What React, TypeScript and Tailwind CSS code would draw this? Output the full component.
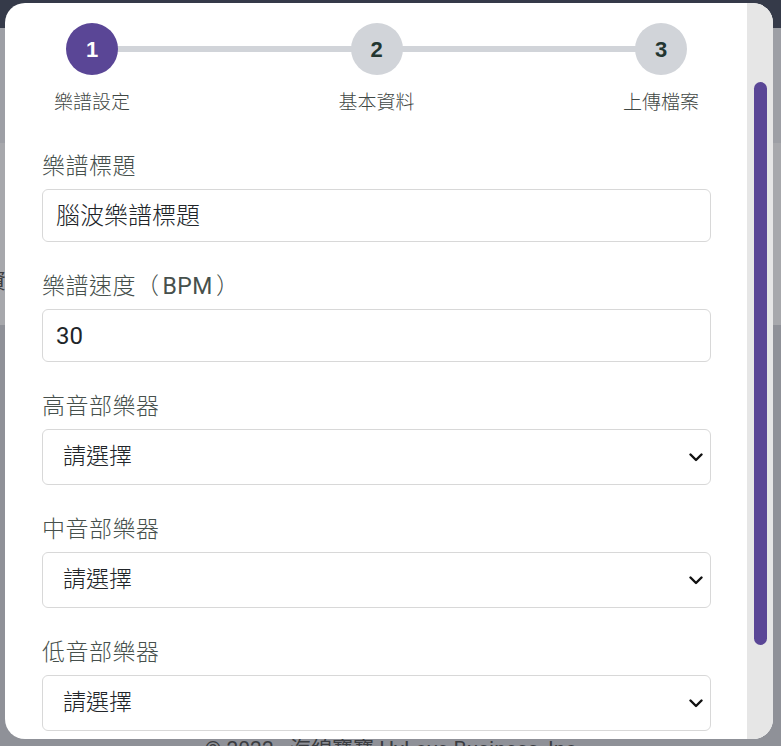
import React from "react";

const FONT = { fontFamily: '"Roboto", "Noto Sans CJK TC", sans-serif' };

const steps = [
  { n: 1, label: "樂譜設定", active: true },
  { n: 2, label: "基本資料", active: false },
  { n: 3, label: "上傳檔案", active: false },
];

function Chevron() {
  return (
    <svg width="14" height="9" viewBox="0 0 14 9" fill="none" className="shrink-0">
      <path d="M1.5 1.5L7 7l5.5-5.5" stroke="#111" strokeWidth="2.4" strokeLinecap="round" strokeLinejoin="round" />
    </svg>
  );
}

function Field({ label, children }: { label: React.ReactNode; children: React.ReactNode }) {
  return (
    <div className="flex flex-col">
      <label className="mb-[7px] h-[30px] text-[23px] font-light leading-[30px] tracking-[0.5px] text-[#46504c]">{label}</label>
      {children}
    </div>
  );
}

function TextBox({ value, latin }: { value: string; latin?: boolean }) {
  return (
    <div
      className={
        latin
          ? "flex h-[53px] items-center rounded-[6px] border border-[#d8d8d8] px-[13px] text-[24px] font-normal text-[#212529]"
          : "flex h-[53px] items-center rounded-[6px] border border-[#d8d8d8] px-[13px] text-[24px] font-light text-[#212529]"
      }
    >
      {value}
    </div>
  );
}

function SelectBox() {
  return (
    <div className="flex h-[56px] items-center justify-between rounded-[6px] border border-[#d8d8d8] pl-[20px] pr-[7px] text-[23px] font-light text-[#212529]">
      <span>請選擇</span>
      <Chevron />
    </div>
  );
}

export default function App() {
  return (
    <div className="relative h-[746px] w-[781px] overflow-hidden bg-[#8f9198]" style={FONT}>
      {/* dimmed page behind */}
      <div className="flex flex-col">
        <div className="h-[28px] bg-[#353a49]" />
        <div className="h-[115px] bg-[#9d9fa5]" />
        <div className="relative h-[182px] bg-[#a7a8ac]">
          <span className="absolute left-[-15px] top-[123px] text-[21px] text-[#3c3d40]">資</span>
        </div>
        <div className="h-[412px]" />
        <div className="text-center text-[21px] leading-[24px] text-[#3a3c40]">© 2022 - 海綿寶寶 HyLove Business, Inc</div>
      </div>

      {/* modal */}
      <div className="absolute left-[5px] top-[3px] flex h-[736px] w-[768px] overflow-hidden rounded-[20px] bg-white">
        <div className="flex-1 pl-[37px] pr-[36px] pt-[20px]">
          <div className="relative flex justify-between">
            <div className="absolute left-[50px] right-[50px] top-[23px] h-[6px] bg-[#d1d4d9]" />
            {steps.map((s) => (
              <div key={s.n} className="relative flex w-[100px] flex-col items-center">
                <div
                  className={
                    s.active
                      ? "flex size-[52px] items-center justify-center rounded-full bg-[#5a4696] text-[22px] font-bold text-white"
                      : "flex size-[52px] items-center justify-center rounded-full bg-[#d1d4d9] text-[22px] font-bold text-[#233631]"
                  }
                  style={{ fontFamily: '"Liberation Sans", sans-serif' }}
                >
                  {s.n}
                </div>
                <div className="mt-[14px] h-[28px] text-[19px] font-light leading-[28px] text-[#3f4744]">{s.label}</div>
              </div>
            ))}
          </div>

          <div className="mt-[35px] flex flex-col gap-[30px]">
            <Field label="樂譜標題">
              <TextBox value="腦波樂譜標題" />
            </Field>
            <Field
              label={
                <>
                  樂譜速度（<span className="mx-[3px] font-normal">BPM</span>）
                </>
              }
            >
              <TextBox value="30" latin />
            </Field>
            <Field label="高音部樂器">
              <SelectBox />
            </Field>
            <Field label="中音部樂器">
              <SelectBox />
            </Field>
            <Field label="低音部樂器">
              <SelectBox />
            </Field>
          </div>
        </div>

        {/* scrollbar */}
        <div className="w-[26px] shrink-0 bg-[#e6e6e6] pt-[79px]">
          <div className="mx-auto h-[563px] w-[13px] rounded-full bg-[#5a4696]" />
        </div>
      </div>
    </div>
  );
}
